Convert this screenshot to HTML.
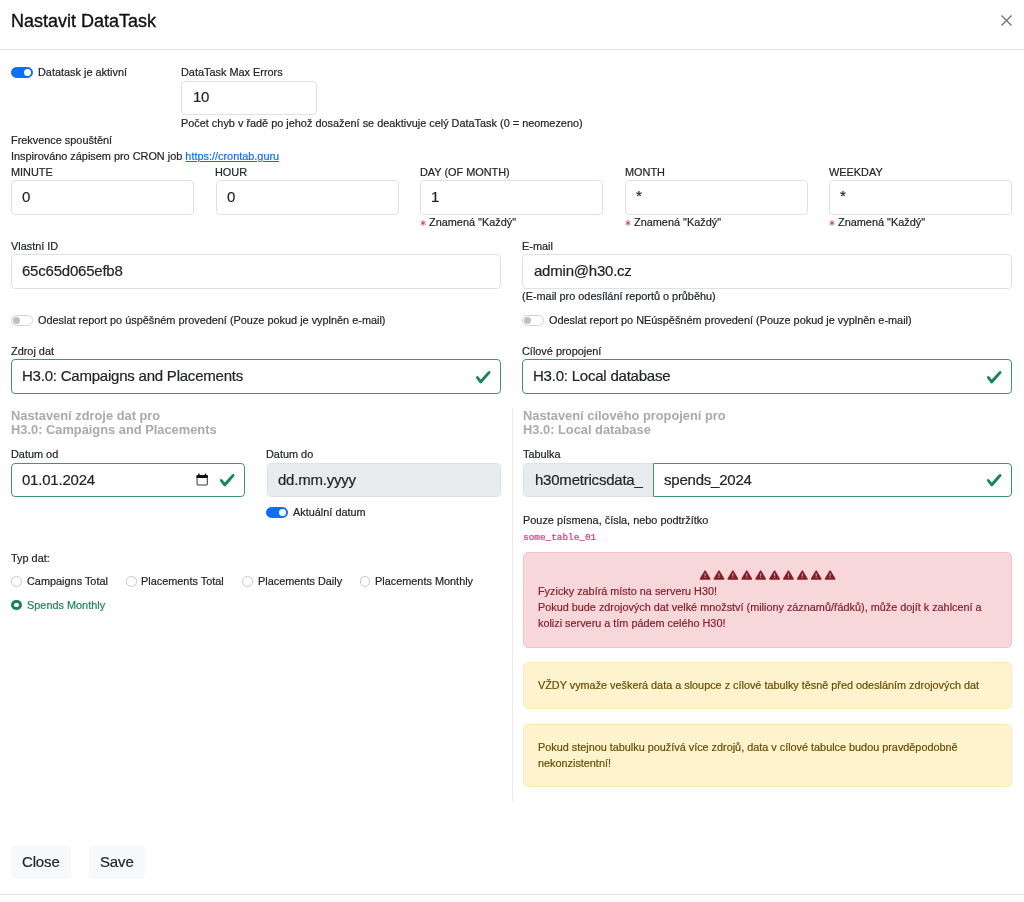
<!DOCTYPE html>
<html><head><meta charset="utf-8">
<style>
html,body{margin:0;padding:0;background:#fff;}
body{width:1024px;height:902px;position:relative;overflow:hidden;font-family:"Liberation Sans",sans-serif;color:#212529;}
.t{will-change:transform;-webkit-text-stroke:0.2px currentColor;position:absolute;white-space:nowrap;line-height:20px;font-size:11px;}
.hr{position:absolute;left:0;width:1024px;height:1px;background:#dee2e6;}
.inp{position:absolute;box-sizing:border-box;height:34px;border:1px solid #dee2e6;border-radius:4px;background:#fff;}
.valid{border-color:#3f9669;}
.dis{background:#e9ecef;}
.sw{position:absolute;box-sizing:border-box;width:22px;height:11px;border-radius:6px;}
.sw.on{background:#0d6efd;border:1px solid #0d6efd;}
.sw.on::after{content:"";position:absolute;right:1.5px;top:1.2px;width:7px;height:7px;border-radius:50%;background:#fff;}
.sw.off{background:#fff;border:1px solid #d3d3d3;}
.sw.off::after{content:"";position:absolute;left:1px;top:1.2px;width:7px;height:7px;border-radius:50%;background:#bfbfbf;}
.rad{position:absolute;box-sizing:border-box;width:10.5px;height:10.5px;border-radius:50%;border:1px solid #c8c8c8;background:#fff;}
.rad.chk{border:3px solid #198754;background:#fff;}
.chkic{position:absolute;width:16.5px;height:16.5px;}
.code{font-family:"Liberation Mono",monospace;color:#d63384;}
.sec{will-change:transform;position:absolute;white-space:nowrap;font-size:12.85px;line-height:14px;font-weight:bold;color:#aaaaaa;}
.alert{position:absolute;box-sizing:border-box;left:523px;width:489px;border-radius:5px;border:1px solid;}
.danger{background:#f8d7da;border-color:#f5c2c7;}
.warn{background:#fff3cd;border-color:#ffecb5;}
.btn{position:absolute;box-sizing:border-box;top:845px;height:34px;background:#f8f9fa;border-radius:5px;}
</style></head><body>
<div class="t" style="left:10.8px;top:10.96px;font-size:18.0px;-webkit-text-stroke:0.35px #111;color:#111">Nastavit DataTask</div>
<svg style="position:absolute;left:1001px;top:15px" width="11" height="11" viewBox="0 0 11 11"><path d="M0.5 0.5L10.5 10.5M10.5 0.5L0.5 10.5" stroke="#707070" stroke-width="1.3"/></svg>
<div class="hr" style="top:49px"></div>
<div class="sw on" style="left:11px;top:67px"></div>
<div class="t" style="left:38.3px;top:62.32px;font-size:10.9px;">Datatask je aktivní</div>
<div class="t" style="left:181px;top:62.32px;font-size:10.9px;">DataTask Max Errors</div>
<div class="inp " style="left:181px;top:81px;width:136px;height:34px;"></div>
<div class="t" style="left:192.5px;top:86.80px;font-size:15px;letter-spacing:-0.22px;">10</div>
<div class="t" style="left:181px;top:112.82px;font-size:10.9px;">Počet chyb v řadě po jehož dosažení se deaktivuje celý DataTask (0 = neomezeno)</div>
<div class="t" style="left:11px;top:129.72px;font-size:10.9px;">Frekvence spouštění</div>
<div class="t" style="left:10.6px;top:145.72px;font-size:10.9px;">Inspirováno zápisem pro CRON job <span style="color:#0d6efd;text-decoration:underline">https://crontab.guru</span></div>
<div class="t" style="left:10.5px;top:162.22px;font-size:10.9px;">MINUTE</div>
<div class="inp " style="left:11px;top:180px;width:183px;height:35px;"></div>
<div class="t" style="left:22px;top:187.00px;font-size:15px;letter-spacing:-0.22px;">0</div>
<div class="t" style="left:215.2px;top:162.22px;font-size:10.9px;">HOUR</div>
<div class="inp " style="left:215.7px;top:180px;width:183px;height:35px;"></div>
<div class="t" style="left:226.7px;top:187.00px;font-size:15px;letter-spacing:-0.22px;">0</div>
<div class="t" style="left:419.8px;top:162.22px;font-size:10.9px;">DAY (OF MONTH)</div>
<div class="inp " style="left:420.3px;top:180px;width:183px;height:35px;"></div>
<div class="t" style="left:431.3px;top:187.00px;font-size:15px;letter-spacing:-0.22px;">1</div>
<div class="t" style="left:624.5px;top:162.22px;font-size:10.9px;">MONTH</div>
<div class="inp " style="left:625px;top:180px;width:183px;height:35px;"></div>
<div class="t" style="left:636px;top:186.00px;font-size:15px;letter-spacing:-0.22px;">*</div>
<div class="t" style="left:828.5px;top:162.22px;font-size:10.9px;">WEEKDAY</div>
<div class="inp " style="left:829px;top:180px;width:183px;height:35px;"></div>
<div class="t" style="left:840px;top:186.00px;font-size:15px;letter-spacing:-0.22px;">*</div>
<svg style="position:absolute;left:420.2px;top:220.3px" width="6" height="6" viewBox="0 0 6 6"><g stroke="#d63384" stroke-width="0.95" stroke-linecap="round"><path d="M3 0.6V5.4"/><path d="M0.95 1.8L5.05 4.2"/><path d="M0.95 4.2L5.05 1.8"/></g></svg>
<div class="t" style="left:428.90000000000003px;top:212.42px;font-size:10.9px;">Znamená "Každý"</div>
<svg style="position:absolute;left:624.9px;top:220.3px" width="6" height="6" viewBox="0 0 6 6"><g stroke="#d63384" stroke-width="0.95" stroke-linecap="round"><path d="M3 0.6V5.4"/><path d="M0.95 1.8L5.05 4.2"/><path d="M0.95 4.2L5.05 1.8"/></g></svg>
<div class="t" style="left:633.6px;top:212.42px;font-size:10.9px;">Znamená "Každý"</div>
<svg style="position:absolute;left:828.9px;top:220.3px" width="6" height="6" viewBox="0 0 6 6"><g stroke="#d63384" stroke-width="0.95" stroke-linecap="round"><path d="M3 0.6V5.4"/><path d="M0.95 1.8L5.05 4.2"/><path d="M0.95 4.2L5.05 1.8"/></g></svg>
<div class="t" style="left:837.6px;top:212.42px;font-size:10.9px;">Znamená "Každý"</div>
<div class="t" style="left:10.5px;top:236.42px;font-size:10.9px;">Vlastní ID</div>
<div class="t" style="left:521.5px;top:236.42px;font-size:10.9px;">E-mail</div>
<div class="inp " style="left:11px;top:254px;width:490px;height:35px;"></div>
<div class="inp " style="left:522px;top:254px;width:490px;height:35px;"></div>
<div class="t" style="left:22px;top:260.90px;font-size:15px;letter-spacing:-0.22px;">65c65d065efb8</div>
<div class="t" style="left:533.8px;top:260.90px;font-size:15px;letter-spacing:-0.22px;">admin@h30.cz</div>
<div class="t" style="left:521.5px;top:286.42px;font-size:10.9px;">(E-mail pro odesílání reportů o průběhu)</div>
<div class="sw off" style="left:11px;top:315.2px"></div>
<div class="t" style="left:38.2px;top:309.72px;font-size:10.9px;">Odeslat report po úspěšném provedení (Pouze pokud je vyplněn e-mail)</div>
<div class="sw off" style="left:522px;top:315.2px"></div>
<div class="t" style="left:549.2px;top:309.72px;font-size:10.9px;">Odeslat report po NEúspěšném provedení (Pouze pokud je vyplněn e-mail)</div>
<div class="t" style="left:10.5px;top:341.02px;font-size:10.9px;">Zdroj dat</div>
<div class="t" style="left:521.5px;top:341.02px;font-size:10.9px;">Cílové propojení</div>
<div class="inp valid" style="left:11px;top:359px;width:490px;height:35px;"></div>
<div class="inp valid" style="left:522px;top:359px;width:490px;height:35px;"></div>
<div class="t" style="left:22px;top:366.20px;font-size:15px;letter-spacing:-0.22px;">H3.0: Campaigns and Placements</div>
<div class="t" style="left:533px;top:366.20px;font-size:15px;letter-spacing:-0.22px;">H3.0: Local database</div>
<svg class="chkic" style="left:475px;top:368.5px;width:16.5px;height:16.5px" viewBox="0 0 8 8"><path fill="#198754" d="M2.3 6.73.6 4.53c-.4-1.04.46-1.4 1.1-.8l1.1 1.4 3.4-3.8c.6-.63 1.6-.27 1.2.7l-4 4.6c-.43.5-.8.4-1.1.1z"/></svg>
<svg class="chkic" style="left:986px;top:368.5px;width:16.5px;height:16.5px" viewBox="0 0 8 8"><path fill="#198754" d="M2.3 6.73.6 4.53c-.4-1.04.46-1.4 1.1-.8l1.1 1.4 3.4-3.8c.6-.63 1.6-.27 1.2.7l-4 4.6c-.43.5-.8.4-1.1.1z"/></svg>
<div class="sec" style="left:11px;top:408.6px">Nastavení zdroje dat pro<br>H3.0: Campaigns and Placements</div>
<div style="position:absolute;left:511.5px;top:408px;width:1px;height:393px;background:#e9ecef"></div>
<div class="sec" style="left:523px;top:408.6px">Nastavení cílového propojení pro<br>H3.0: Local database</div>
<div class="t" style="left:10.5px;top:444.42px;font-size:10.9px;">Datum od</div>
<div class="t" style="left:266px;top:444.42px;font-size:10.9px;">Datum do</div>
<div class="t" style="left:522.5px;top:444.42px;font-size:10.9px;">Tabulka</div>
<div class="inp valid" style="left:11px;top:463px;width:233.5px;height:34px;"></div>
<div class="t" style="left:22px;top:469.50px;font-size:15px;letter-spacing:-0.22px;">01.01.2024</div>
<svg style="position:absolute;left:195.7px;top:472.7px" width="12.4" height="13.2" viewBox="0 0 13 14"><rect x="1.05" y="2.55" width="10.9" height="10.3" rx="1.3" fill="none" stroke="#3a3a3a" stroke-width="1.1"/><rect x="0.5" y="2" width="12" height="3.4" rx="1" fill="#111"/><rect x="2.3" y="0.6" width="1.5" height="2" fill="#111"/><rect x="9.2" y="0.6" width="1.5" height="2" fill="#111"/></svg>
<svg class="chkic" style="left:218.5px;top:471.5px;width:16.5px;height:16.5px" viewBox="0 0 8 8"><path fill="#198754" d="M2.3 6.73.6 4.53c-.4-1.04.46-1.4 1.1-.8l1.1 1.4 3.4-3.8c.6-.63 1.6-.27 1.2.7l-4 4.6c-.43.5-.8.4-1.1.1z"/></svg>
<div class="inp dis" style="left:266.5px;top:463px;width:234.5px;height:34px;"></div>
<div class="t" style="left:277.5px;top:469.50px;font-size:15px;letter-spacing:-0.22px;">dd.mm.yyyy</div>
<div class="sw on" style="left:266px;top:506.5px"></div>
<div class="t" style="left:293.3px;top:502.42px;font-size:10.9px;">Aktuální datum</div>
<div class="inp dis" style="left:523px;top:463px;width:131px;height:34px;border-radius:4px 0 0 4px"></div>
<div class="t" style="left:534.5px;top:469.50px;font-size:15px;letter-spacing:-0.22px;">h30metricsdata_</div>
<div class="inp valid" style="left:653px;top:463px;width:359px;height:34px;border-radius:0 4px 4px 0"></div>
<div class="t" style="left:664px;top:469.50px;font-size:15px;letter-spacing:-0.22px;">spends_2024</div>
<svg class="chkic" style="left:986px;top:471.5px;width:16.5px;height:16.5px" viewBox="0 0 8 8"><path fill="#198754" d="M2.3 6.73.6 4.53c-.4-1.04.46-1.4 1.1-.8l1.1 1.4 3.4-3.8c.6-.63 1.6-.27 1.2.7l-4 4.6c-.43.5-.8.4-1.1.1z"/></svg>
<div class="t" style="left:522.5px;top:509.82px;font-size:10.9px;">Pouze písmena, čísla, nebo podtržítko</div>
<div class="t code" style="left:523px;top:527.5px;font-size:9.4px">some_table_01</div>
<div class="t" style="left:10.5px;top:548.22px;font-size:10.9px;">Typ dat:</div>
<div class="rad" style="left:11px;top:576px"></div>
<div class="t" style="left:27.2px;top:571.42px;font-size:10.9px;">Campaigns Total</div>
<div class="rad" style="left:126px;top:576px"></div>
<div class="t" style="left:141.2px;top:571.42px;font-size:10.9px;">Placements Total</div>
<div class="rad" style="left:242px;top:576px"></div>
<div class="t" style="left:257.7px;top:571.42px;font-size:10.9px;">Placements Daily</div>
<div class="rad" style="left:359.5px;top:576px"></div>
<div class="t" style="left:375.2px;top:571.42px;font-size:10.9px;">Placements Monthly</div>
<div class="rad chk" style="left:11px;top:599.5px"></div>
<div class="t" style="left:27.2px;top:594.92px;font-size:10.9px;color:#198754">Spends Monthly</div>
<div class="alert danger" style="top:551.5px;height:96px"></div>
<svg style="position:absolute;left:699px;top:569.7px" width="140" height="10" viewBox="0 0 140 10"><g transform="translate(0.60,0)"><path d="M5.5 1.1L10.15 9H0.85Z" fill="#842029" stroke="#842029" stroke-width="1.5" stroke-linejoin="round"/><rect x="4.95" y="3.3" width="1.1" height="3.1" fill="#d39aa1"/><rect x="4.95" y="7.1" width="1.1" height="0.9" fill="#d39aa1"/></g><g transform="translate(14.49,0)"><path d="M5.5 1.1L10.15 9H0.85Z" fill="#842029" stroke="#842029" stroke-width="1.5" stroke-linejoin="round"/><rect x="4.95" y="3.3" width="1.1" height="3.1" fill="#d39aa1"/><rect x="4.95" y="7.1" width="1.1" height="0.9" fill="#d39aa1"/></g><g transform="translate(28.38,0)"><path d="M5.5 1.1L10.15 9H0.85Z" fill="#842029" stroke="#842029" stroke-width="1.5" stroke-linejoin="round"/><rect x="4.95" y="3.3" width="1.1" height="3.1" fill="#d39aa1"/><rect x="4.95" y="7.1" width="1.1" height="0.9" fill="#d39aa1"/></g><g transform="translate(42.27,0)"><path d="M5.5 1.1L10.15 9H0.85Z" fill="#842029" stroke="#842029" stroke-width="1.5" stroke-linejoin="round"/><rect x="4.95" y="3.3" width="1.1" height="3.1" fill="#d39aa1"/><rect x="4.95" y="7.1" width="1.1" height="0.9" fill="#d39aa1"/></g><g transform="translate(56.16,0)"><path d="M5.5 1.1L10.15 9H0.85Z" fill="#842029" stroke="#842029" stroke-width="1.5" stroke-linejoin="round"/><rect x="4.95" y="3.3" width="1.1" height="3.1" fill="#d39aa1"/><rect x="4.95" y="7.1" width="1.1" height="0.9" fill="#d39aa1"/></g><g transform="translate(70.05,0)"><path d="M5.5 1.1L10.15 9H0.85Z" fill="#842029" stroke="#842029" stroke-width="1.5" stroke-linejoin="round"/><rect x="4.95" y="3.3" width="1.1" height="3.1" fill="#d39aa1"/><rect x="4.95" y="7.1" width="1.1" height="0.9" fill="#d39aa1"/></g><g transform="translate(83.94,0)"><path d="M5.5 1.1L10.15 9H0.85Z" fill="#842029" stroke="#842029" stroke-width="1.5" stroke-linejoin="round"/><rect x="4.95" y="3.3" width="1.1" height="3.1" fill="#d39aa1"/><rect x="4.95" y="7.1" width="1.1" height="0.9" fill="#d39aa1"/></g><g transform="translate(97.83,0)"><path d="M5.5 1.1L10.15 9H0.85Z" fill="#842029" stroke="#842029" stroke-width="1.5" stroke-linejoin="round"/><rect x="4.95" y="3.3" width="1.1" height="3.1" fill="#d39aa1"/><rect x="4.95" y="7.1" width="1.1" height="0.9" fill="#d39aa1"/></g><g transform="translate(111.72,0)"><path d="M5.5 1.1L10.15 9H0.85Z" fill="#842029" stroke="#842029" stroke-width="1.5" stroke-linejoin="round"/><rect x="4.95" y="3.3" width="1.1" height="3.1" fill="#d39aa1"/><rect x="4.95" y="7.1" width="1.1" height="0.9" fill="#d39aa1"/></g><g transform="translate(125.61,0)"><path d="M5.5 1.1L10.15 9H0.85Z" fill="#842029" stroke="#842029" stroke-width="1.5" stroke-linejoin="round"/><rect x="4.95" y="3.3" width="1.1" height="3.1" fill="#d39aa1"/><rect x="4.95" y="7.1" width="1.1" height="0.9" fill="#d39aa1"/></g></svg>
<div class="t" style="left:538.3px;top:581.44px;font-size:10.85px;color:#842029">Fyzicky zabírá místo na serveru H30!</div>
<div class="t" style="left:538.3px;top:597.44px;font-size:10.85px;color:#842029">Pokud bude zdrojových dat velké množství (miliony záznamů/řádků), může dojít k zahlcení a</div>
<div class="t" style="left:538.3px;top:613.44px;font-size:10.85px;color:#842029">kolizi serveru a tím pádem celého H30!</div>
<div class="alert warn" style="top:662px;height:47px"></div>
<div class="t" style="left:538.3px;top:675.24px;font-size:10.85px;color:#664d03">VŽDY vymaže veškerá data a sloupce z cílové tabulky těsně před odesláním zdrojových dat</div>
<div class="alert warn" style="top:723.5px;height:63px"></div>
<div class="t" style="left:538.3px;top:736.74px;font-size:10.85px;color:#664d03">Pokud stejnou tabulku používá více zdrojů, data v cílové tabulce budou pravděpodobně</div>
<div class="t" style="left:538.3px;top:752.94px;font-size:10.85px;color:#664d03">nekonzistentní!</div>
<div class="btn" style="left:11px;width:60px"></div>
<div class="btn" style="left:89px;width:56px"></div>
<div class="t" style="left:22px;top:851.70px;font-size:15px;letter-spacing:-0.15px">Close</div>
<div class="t" style="left:99.5px;top:851.70px;font-size:15px;letter-spacing:-0.15px">Save</div>
<div class="hr" style="top:894px"></div>
</body></html>
